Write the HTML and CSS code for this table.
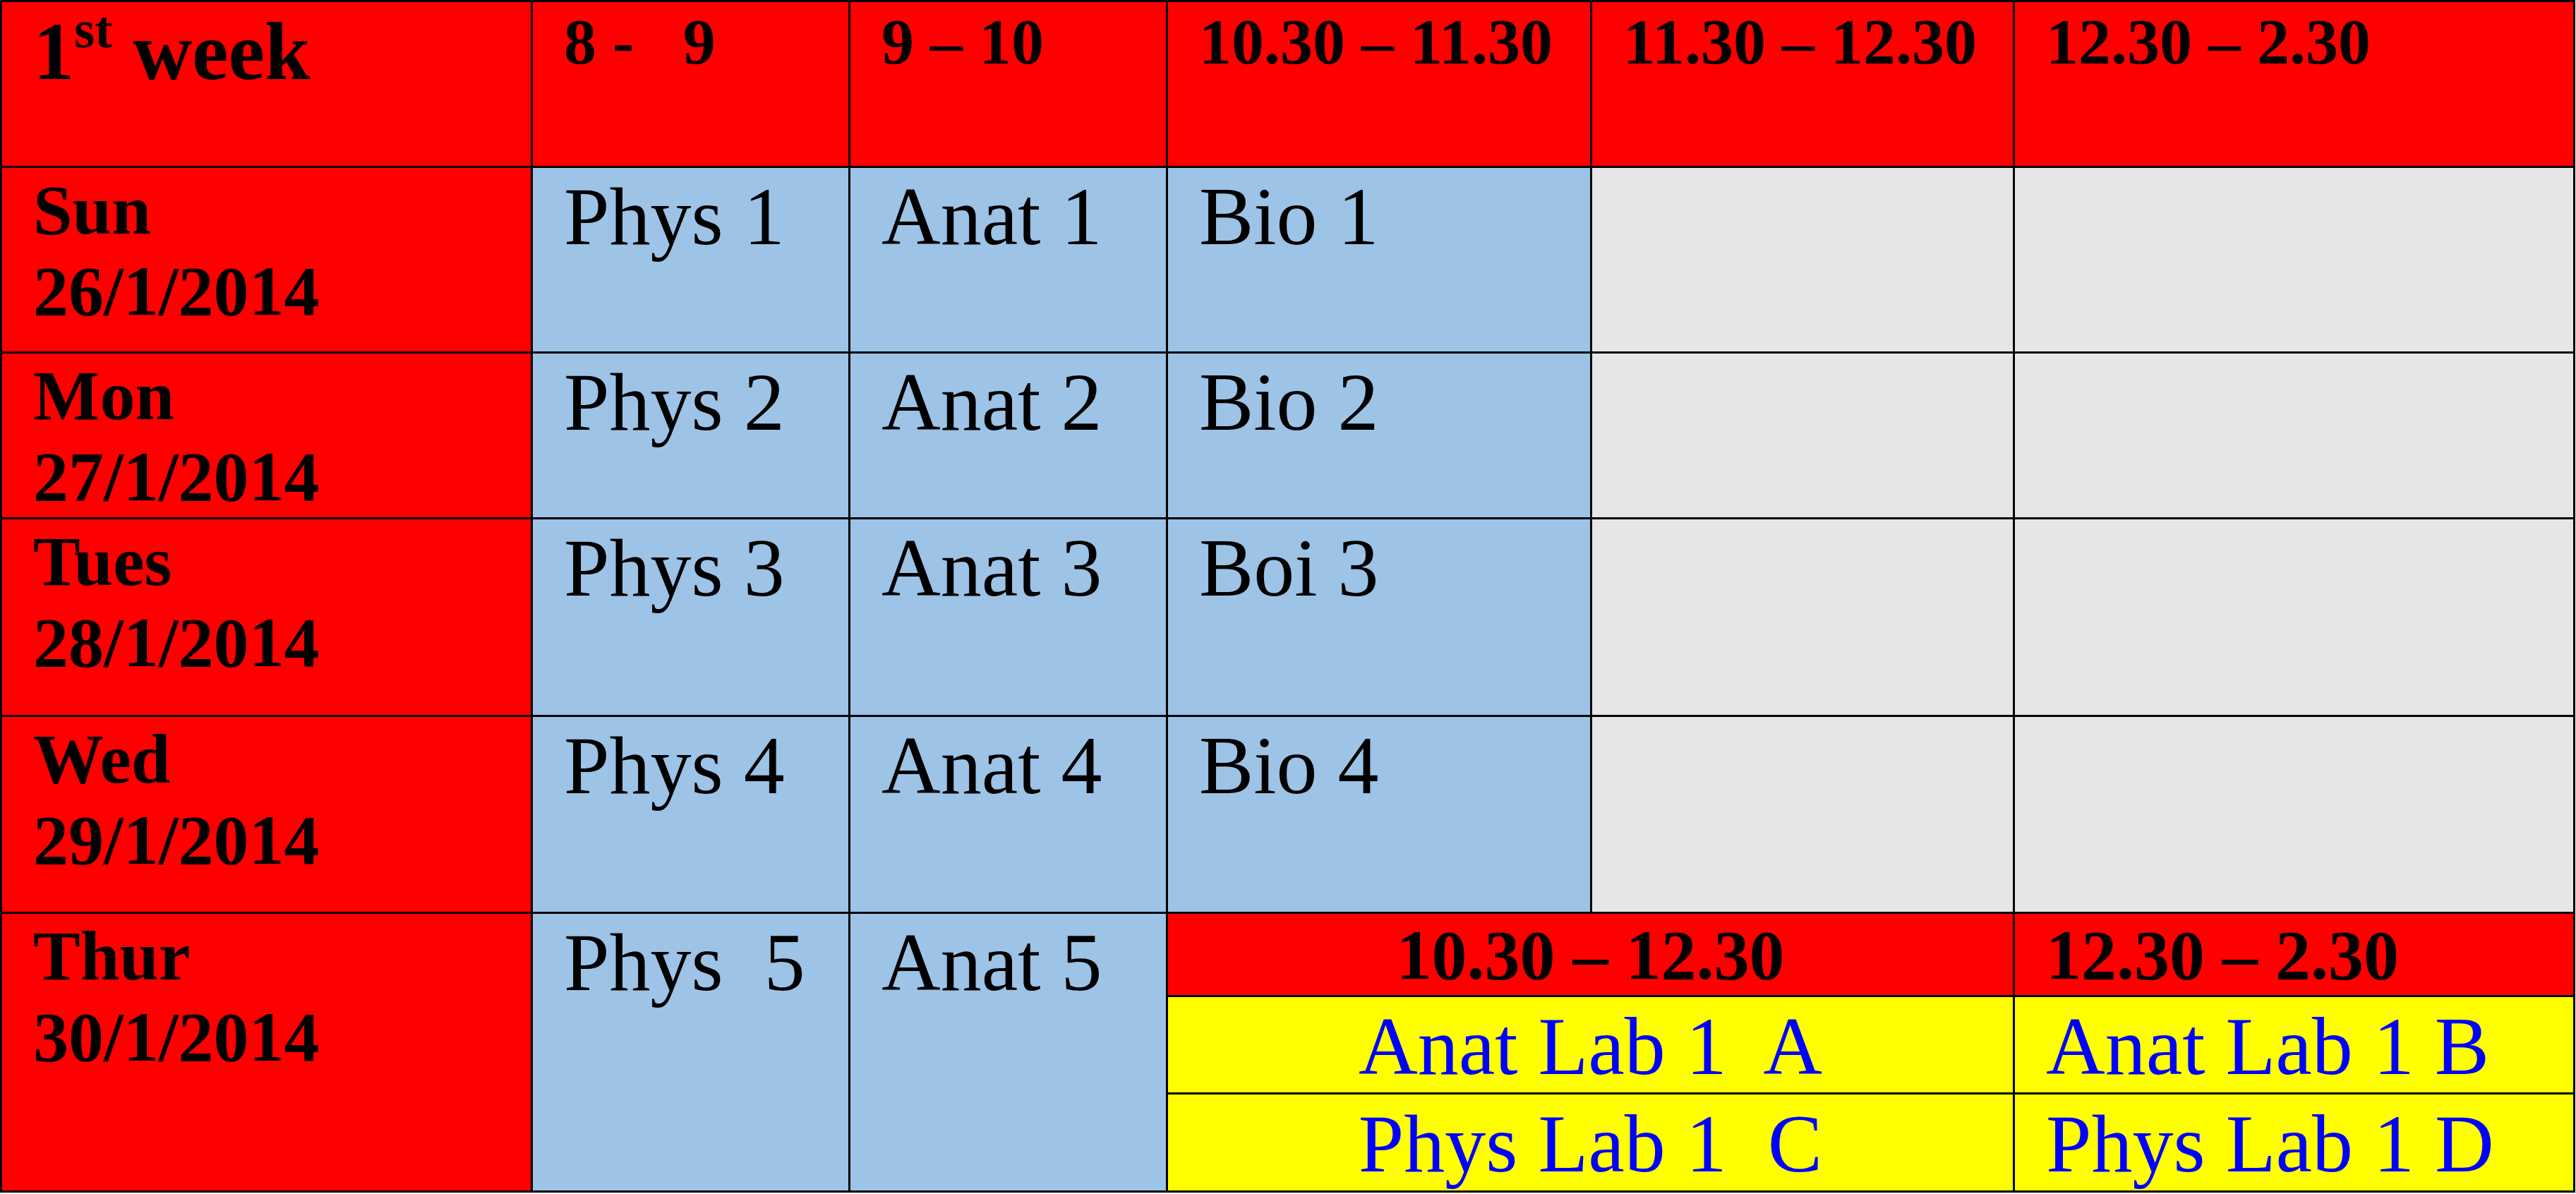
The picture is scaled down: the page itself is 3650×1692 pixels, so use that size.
FILE: index.html
```html
<!DOCTYPE html>
<html>
<head>
  <title>1st week timetable</title>
  <meta charset="UTF-8">
  <link rel="stylesheet" href="styles.css">
</head>
<body>
  <div class="timetable">
    <!-- header row -->
    <div class="cell hdr week">1<span class="ord">st</span> week</div>
    <div class="cell hdr time">8 -   9</div>
    <div class="cell hdr time">9 – 10</div>
    <div class="cell hdr time">10.30 – 11.30</div>
    <div class="cell hdr time">11.30 – 12.30</div>
    <div class="cell hdr time">12.30 – 2.30</div>

    <div class="cell hdr day">Sun<br>26/1/2014</div>
    <div class="cell course">Phys 1</div>
    <div class="cell course">Anat 1</div>
    <div class="cell course">Bio 1</div>
    <div class="cell free"></div>
    <div class="cell free"></div>

    <div class="cell hdr day">Mon<br>27/1/2014</div>
    <div class="cell course">Phys 2</div>
    <div class="cell course">Anat 2</div>
    <div class="cell course">Bio 2</div>
    <div class="cell free"></div>
    <div class="cell free"></div>

    <div class="cell hdr day">Tues<br>28/1/2014</div>
    <div class="cell course">Phys 3</div>
    <div class="cell course">Anat 3</div>
    <div class="cell course">Boi 3</div>
    <div class="cell free"></div>
    <div class="cell free"></div>

    <div class="cell hdr day">Wed<br>29/1/2014</div>
    <div class="cell course">Phys 4</div>
    <div class="cell course">Anat 4</div>
    <div class="cell course">Bio 4</div>
    <div class="cell free"></div>
    <div class="cell free"></div>

    <!-- thursday: labs -->
    <div class="cell hdr day span-rows">Thur<br>30/1/2014</div>
    <div class="cell course span-rows">Phys  5</div>
    <div class="cell course span-rows">Anat 5</div>
    <div class="cell hdr lab-time span-cols center">10.30 – 12.30</div>
    <div class="cell hdr lab-time">12.30 – 2.30</div>
    <div class="cell lab span-cols center">Anat Lab 1  A</div>
    <div class="cell lab">Anat Lab 1 B</div>
    <div class="cell lab span-cols center">Phys Lab 1  C</div>
    <div class="cell lab">Phys Lab 1 D</div>
  </div>
</body>
</html>
```

FILE: styles.css
```css
body {
  margin: 0;
  padding: 0;
  background-color: #ffffff;
  font-family: 'Liberation Serif', 'Times New Roman', serif;
}
.timetable {
  display: grid;
  grid-template-columns: 749px 447px 447px 598px 596px 791px;
  grid-template-rows: 232px 260px 232px 277px 276px 115px 135px 136px;
  gap: 3px;
  padding: 3px;
  width: max-content;
  background-color: #000000;
}
.cell {
  padding-left: 44px;
  white-space: pre;
  color: #000000;
  overflow: visible;
}
.hdr {
  background-color: #ff0000;
  font-weight: bold;
}
.week {
  font-size: 116px;
  line-height: 133px;
  padding-top: 4px;
}
.ord {
  font-size: 75px;
  line-height: 0;
  vertical-align: 45px;
}
.time {
  font-size: 92px;
  line-height: 106px;
  padding-top: 3px;
}
.day {
  font-size: 100px;
  line-height: 115px;
  padding-top: 2px;
}
.course {
  background-color: #9dc3e6;
  font-size: 116px;
  line-height: 133px;
  padding-top: 3px;
}
.free {
  background-color: #e7e6e6;
}
.lab-time {
  font-size: 100px;
  line-height: 110px;
  padding-top: 4px;
}
.lab {
  background-color: #ffff00;
  color: #0000ff;
  font-size: 116px;
  line-height: 128px;
  padding-top: 6px;
}
.span-rows {
  grid-row: span 3;
}
.span-cols {
  grid-column: span 2;
}
.center {
  padding-left: 0;
  text-align: center;
}
```
